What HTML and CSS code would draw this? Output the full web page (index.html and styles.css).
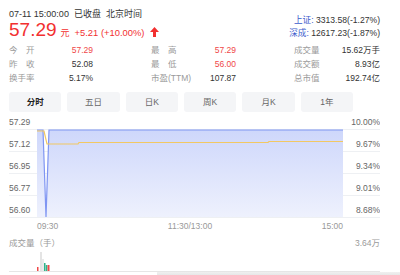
FILE: index.html
```html
<!DOCTYPE html>
<html lang="zh-CN">
<head>
    <meta charset="UTF-8">
    <meta name="viewport" content="width=device-width, initial-scale=1.0">
    <title>分时</title>
    <link rel="stylesheet" href="styles.css">
</head>
<body>
    <div class="page">
        <div class="head">
            <div class="head-main">
                <div class="time">07-11 15:00:00<span>已收盘</span><span>北京时间</span></div>
                <div class="quote">
                    <span class="price">57.29</span>
                    <span class="unit">元</span>
                    <span class="change">+5.21 (+10.00%)</span>
                    <svg class="arrow" width="9" height="10" viewBox="0 0 9 10">
                        <polygon points="4.5,0 9,5 6,5 6,10 3,10 3,5 0,5" fill="#f23030"/>
                    </svg>
                </div>
            </div>
            <div class="indexes">
                <div><a href="#">上证:</a> 3313.58(-1.27%)</div>
                <div><a href="#">深成:</a> 12617.23(-1.87%)</div>
            </div>
        </div>

        <div class="stats">
            <div class="stat"><span class="label">今&emsp;开</span><span class="value up">57.29</span></div>
            <div class="stat"><span class="label">最&emsp;高</span><span class="value up">57.29</span></div>
            <div class="stat"><span class="label">成交量</span><span class="value">15.62万手</span></div>
            <div class="stat"><span class="label">昨&emsp;收</span><span class="value">52.08</span></div>
            <div class="stat"><span class="label">最&emsp;低</span><span class="value up">56.00</span></div>
            <div class="stat"><span class="label">成交额</span><span class="value">8.93亿</span></div>
            <div class="stat"><span class="label">换手率</span><span class="value">5.17%</span></div>
            <div class="stat"><span class="label">市盈(TTM)</span><span class="value">107.87</span></div>
            <div class="stat"><span class="label">总市值</span><span class="value">192.74亿</span></div>
        </div>

        <nav class="tabs">
            <a href="#" class="active">分时</a>
            <a href="#">五日</a>
            <a href="#">日K</a>
            <a href="#">周K</a>
            <a href="#">月K</a>
            <a href="#">1年</a>
        </nav>

        <svg class="chart" width="371" height="120" viewBox="0 0 371 120">
            <defs>
                <linearGradient id="area" x1="0" y1="0" x2="0" y2="1">
                    <stop offset="0" stop-color="#ced7fb"/>
                    <stop offset="1" stop-color="#eef1fd"/>
                </linearGradient>
            </defs>
            <g stroke="#eef0f3" stroke-width="1">
                <line x1="0" y1="16.5" x2="371" y2="16.5"/>
                <line x1="0" y1="38.5" x2="371" y2="38.5"/>
                <line x1="0" y1="60.5" x2="371" y2="60.5"/>
                <line x1="0" y1="82.5" x2="371" y2="82.5"/>
                <line x1="0" y1="104.5" x2="371" y2="104.5"/>
            </g>
            <polygon points="28,17 34,17 37,104 40,17 334,17 334,104 28,104" fill="url(#area)"/>
            <polyline points="28,17 34,17 37,104 40,17 334,17" fill="none" stroke="#7f95f2" stroke-width="1.2"/>
            <polyline points="28,18 35,18 38,31 69,31 70,29.5 259,29.5 260,28.5 334,28.5" fill="none" stroke="#f2c863" stroke-width="1.2"/>
            <g class="axis-left">
                <text x="0" y="11.5">57.29</text>
                <text x="0" y="33.5">57.12</text>
                <text x="0" y="55.5">56.95</text>
                <text x="0" y="77.5">56.77</text>
                <text x="0" y="99.5">56.60</text>
            </g>
            <g class="axis-right" text-anchor="end">
                <text x="371" y="11.5">10.00%</text>
                <text x="371" y="33.5">9.67%</text>
                <text x="371" y="55.5">9.34%</text>
                <text x="371" y="77.5">9.01%</text>
                <text x="371" y="99.5">8.68%</text>
            </g>
            <g class="axis-time">
                <text x="28" y="116">09:30</text>
                <text x="181" y="116" text-anchor="middle">11:30/13:00</text>
                <text x="334" y="116" text-anchor="end">15:00</text>
            </g>
        </svg>

        <div class="vol-head">
            <span>成交量（手）</span>
            <span>3.64万</span>
        </div>
        <svg class="vol" width="371" height="22" viewBox="0 0 371 22">
            <line x1="0" y1="21.5" x2="371" y2="21.5" stroke="#e6e6e6"/>
            <rect x="28" y="17" width="1.5" height="4" fill="#f04848"/>
            <rect x="31.5" y="2" width="1" height="19" fill="#c9c9c9"/>
            <rect x="33.5" y="9" width="1" height="12" fill="#d6d6d6"/>
            <rect x="35" y="13" width="1.5" height="8" fill="#2fb38a"/>
            <rect x="36.8" y="15" width="1.5" height="6" fill="#2fb38a"/>
            <rect x="38.5" y="15" width="2" height="6" fill="#f04848"/>
        </svg>
        <div class="foot"></div>
    </div>
</body>
</html>
```

FILE: styles.css
```css
body {
    margin: 0;
    font-family: "Liberation Sans", "Noto Sans CJK SC", sans-serif;
    background-color: #ffffff;
    color: #333;
}
.page {
    width: 371px;
    padding: 8px 0 0 9px;
}
.head {
    display: flex;
    justify-content: space-between;
    align-items: flex-end;
}
.time {
    font-size: 9px;
    line-height: 12px;
    color: #333;
}
.time span {
    margin-left: 5px;
}
.quote {
    display: flex;
    align-items: baseline;
    height: 20px;
    color: #f23030;
}
.price {
    font-size: 19px;
    line-height: 20px;
}
.unit {
    font-size: 9px;
    margin-left: 4px;
}
.change {
    font-size: 9.4px;
    margin-left: 5px;
}
.arrow {
    margin-left: 6px;
    align-self: center;
    margin-top: 3px;
}
.indexes {
    font-size: 8.6px;
    line-height: 13px;
    text-align: right;
    color: #333;
}
.indexes a {
    color: #3b5bcc;
    text-decoration: none;
}
.stats {
    display: grid;
    grid-template-columns: 84px 85px 86px;
    justify-content: space-between;
    margin-top: 3px;
    font-size: 8.5px;
    line-height: 14px;
}
.stat {
    display: flex;
    justify-content: space-between;
}
.label {
    color: #9a9a9a;
}
.value {
    color: #333;
}
.value.up {
    color: #f04848;
}
.tabs {
    display: flex;
    gap: 6px;
    margin-top: 7px;
    width: 344px;
}
.tabs a {
    flex: 1;
    height: 20px;
    line-height: 20px;
    text-align: center;
    font-size: 8.5px;
    color: #666;
    text-decoration: none;
    background-color: #f4f5f7;
    border-radius: 3px;
}
.tabs a.active {
    color: #222;
    font-weight: bold;
}
.chart {
    display: block;
    margin-top: 1px;
    font-size: 8.5px;
}
.axis-left text,
.axis-right text {
    fill: #666;
}
.axis-time text {
    fill: #999;
}
.vol-head {
    display: flex;
    justify-content: space-between;
    margin-top: 4px;
    font-size: 8.5px;
    line-height: 12px;
    color: #9a9a9a;
}
.vol {
    display: block;
    margin-top: 1px;
}
.foot {
    height: 4px;
    margin-left: 148px;
    width: 252px;
    background: linear-gradient(#f0f0f0, #e4e4e4);
}
```
